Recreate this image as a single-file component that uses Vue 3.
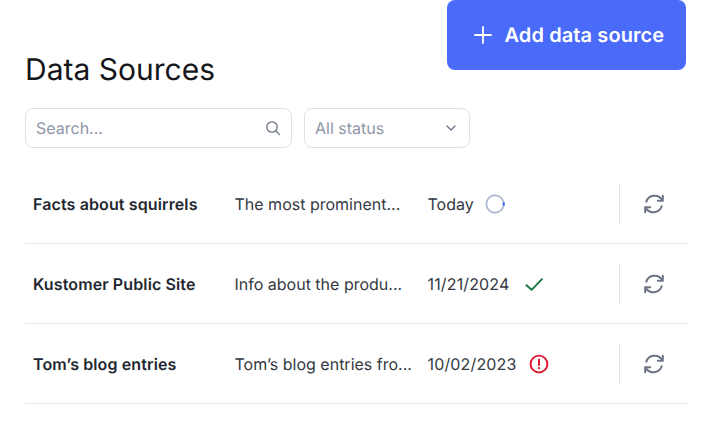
<script setup>
const rows = [
  { name: 'Facts about squirrels', desc: 'The most prominent...', date: 'Today', status: 'loading' },
  { name: 'Kustomer Public Site', desc: 'Info about the produ...', date: '11/21/2024', status: 'ok' },
  { name: 'Tom’s blog entries', desc: 'Tom’s blog entries fro...', date: '10/02/2023', status: 'error' },
]
</script>

<template>
  <div class="page">
    <header class="header">
      <h1 class="title">Data Sources</h1>
      <button class="add">
        <svg width="18" height="18" viewBox="0 0 18 18" fill="none" stroke="#fff" stroke-width="1.8" stroke-linecap="round">
          <path d="M9 1v16M1 9h16" />
        </svg>
        <span>Add data source</span>
      </button>
    </header>

    <div class="filters">
      <div class="field search">
        <span>Search...</span>
        <svg width="16" height="16" viewBox="0 0 16 16" fill="none" stroke="#6b7385" stroke-width="1.3" stroke-linecap="round">
          <circle cx="7" cy="7" r="5.2" />
          <path d="M11 11l3.6 3.6" />
        </svg>
      </div>
      <div class="field status">
        <span>All status</span>
        <svg width="12" height="12" viewBox="0 0 12 12" fill="none" stroke="#6b7385" stroke-width="1.3" stroke-linecap="round" stroke-linejoin="round">
          <path d="M2 4l4 4 4-4" />
        </svg>
      </div>
    </div>

    <div class="list">
      <div v-for="r in rows" :key="r.name" class="row">
        <div class="name">{{ r.name }}</div>
        <div class="desc">{{ r.desc }}</div>
        <div class="date">
          <span :class="{ numeric: r.status !== 'loading' }">{{ r.date }}</span>
          <svg v-if="r.status === 'loading'" class="st spin" width="20" height="20" viewBox="0 0 20 20" fill="none">
            <circle cx="10" cy="10" r="8.7" stroke="#b3bcd2" stroke-width="1.9" />
            <path d="M18.7 8.2a9 9 0 0 1 0 3.4" stroke="#3f66fa" stroke-width="1.9" />
          </svg>
          <svg v-else-if="r.status === 'ok'" class="st" width="20" height="20" viewBox="0 0 20 20" fill="none" stroke="#14773f" stroke-width="1.9" stroke-linecap="round" stroke-linejoin="round">
            <path d="M3.4 11.2l5.2 4.6L19 5.2" />
          </svg>
          <svg v-else class="st" width="20" height="20" viewBox="0 0 20 20" fill="none">
            <circle cx="10" cy="10" r="8.4" stroke="#e0142e" stroke-width="1.9" />
            <path d="M10 5.5v5.5" stroke="#e0142e" stroke-width="2" stroke-linecap="round" />
            <circle cx="10" cy="14.2" r="1.1" fill="#e0142e" />
          </svg>
        </div>
        <div class="action">
          <svg width="22" height="22" viewBox="0 0 24 24" fill="none" stroke="#6b7385" stroke-width="2.2" stroke-linecap="round" stroke-linejoin="round">
            <path d="M21 8A9.5 9.5 0 0 0 3.6 9.5" />
            <path d="M21.6 3v5.4h-5.4" />
            <path d="M3 16a9.5 9.5 0 0 0 17.4-1.5" />
            <path d="M2.4 21v-5.4h5.4" />
          </svg>
        </div>
      </div>
    </div>
  </div>
</template>

<style scoped>
.page {
  width: 664px;
  margin-left: 25px;
  font-family: Inter, "Liberation Sans", sans-serif;
  color: #22262e;
  text-rendering: geometricPrecision;
}
.header {
  display: flex;
  justify-content: space-between;
  align-items: flex-start;
  padding-right: 3px;
}
.title {
  margin: 52px 0 0;
  font-size: 30px;
  line-height: 36px;
  font-weight: 400;
  color: #14161a;
}
.add {
  width: 239px;
  height: 70px;
  border: 0;
  border-radius: 8px;
  background: #4a6bfa;
  color: #fff;
  font: 600 20px Inter, "Liberation Sans", sans-serif;
  letter-spacing: 0.1px;
  text-rendering: geometricPrecision;
  display: flex;
  align-items: center;
  gap: 13px;
  padding: 0 0 0 26.5px;
}
.filters {
  display: flex;
  gap: 12px;
  margin-top: 20px;
}
.field {
  box-sizing: border-box;
  height: 40px;
  border: 1px solid #dfe1ea;
  border-radius: 8px;
  display: flex;
  align-items: center;
  justify-content: space-between;
  font-size: 16px;
  color: #8f96a8;
  background: #fff;
}
.search {
  width: 267px;
  padding: 0 10px 0 10px;
}
.status {
  width: 166px;
  padding: 0 12px 0 10px;
}
.list {
  margin-top: 16px;
}
.row {
  box-sizing: border-box;
  height: 80px;
  border-bottom: 1px solid #e6e7ef;
  display: flex;
  align-items: center;
  padding-left: 8px;
  font-size: 16px;
}
.name {
  width: 201.5px;
  font-weight: 600;
  letter-spacing: 0.12px;
}
.desc {
  width: 193px;
  color: #343842;
  white-space: nowrap;
}
.date {
  width: 191.5px;
  display: flex;
  align-items: center;
  gap: 13px;
  color: #343842;
}
.numeric {
  letter-spacing: 0.15px;
}
.st {
  flex: none;
}
.spin {
  margin-left: -2px;
}
.action {
  height: 40px;
  width: 70px;
  border-left: 1px solid #e2e3e8;
  display: flex;
  align-items: center;
  padding-left: 23px;
  box-sizing: border-box;
}
</style>
